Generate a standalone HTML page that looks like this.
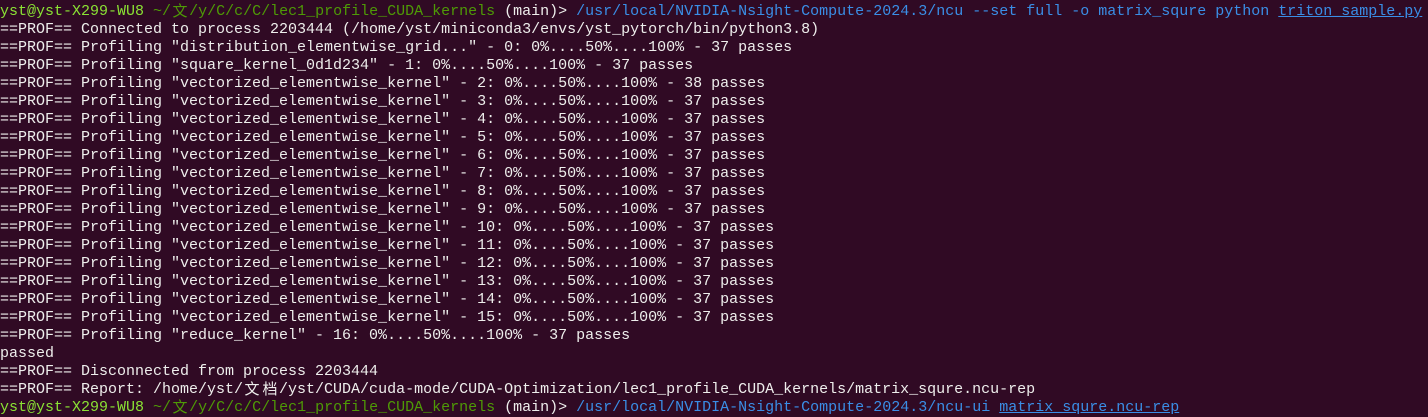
<!DOCTYPE html>
<html><head><meta charset="utf-8"><style>
html,body{margin:0;padding:0;background:#300a24;width:1428px;height:417px;overflow:hidden}
pre{margin:0;padding:3px 0 0 0;font-family:"Liberation Mono","Noto Sans CJK SC",monospace;font-size:15px;line-height:18px;color:#eeeeec;white-space:pre}
.u{color:#8ae234}.p{color:#4e9a06}.b{color:#3a8ee6}.ul{text-decoration:underline}
.c{display:inline-block;width:18px;height:18px;line-height:16px;vertical-align:top;overflow:hidden;text-align:center;font-family:"Noto Sans CJK SC",sans-serif;font-size:15px}
</style></head><body><pre><span class="u">yst@yst-X299-WU8</span> <span class="p">~/<span class="c">文</span>/y/C/c/C/lec1_profile_CUDA_kernels</span> (main)&gt; <span class="b">/usr/local/NVIDIA-Nsight-Compute-2024.3/ncu --set full -o matrix_squre python <span class="ul">triton_sample.py</span></span>
==PROF== Connected to process 2203444 (/home/yst/miniconda3/envs/yst_pytorch/bin/python3.8)
==PROF== Profiling "distribution_elementwise_grid..." - 0: 0%....50%....100% - 37 passes
==PROF== Profiling "square_kernel_0d1d234" - 1: 0%....50%....100% - 37 passes
==PROF== Profiling "vectorized_elementwise_kernel" - 2: 0%....50%....100% - 38 passes
==PROF== Profiling "vectorized_elementwise_kernel" - 3: 0%....50%....100% - 37 passes
==PROF== Profiling "vectorized_elementwise_kernel" - 4: 0%....50%....100% - 37 passes
==PROF== Profiling "vectorized_elementwise_kernel" - 5: 0%....50%....100% - 37 passes
==PROF== Profiling "vectorized_elementwise_kernel" - 6: 0%....50%....100% - 37 passes
==PROF== Profiling "vectorized_elementwise_kernel" - 7: 0%....50%....100% - 37 passes
==PROF== Profiling "vectorized_elementwise_kernel" - 8: 0%....50%....100% - 37 passes
==PROF== Profiling "vectorized_elementwise_kernel" - 9: 0%....50%....100% - 37 passes
==PROF== Profiling "vectorized_elementwise_kernel" - 10: 0%....50%....100% - 37 passes
==PROF== Profiling "vectorized_elementwise_kernel" - 11: 0%....50%....100% - 37 passes
==PROF== Profiling "vectorized_elementwise_kernel" - 12: 0%....50%....100% - 37 passes
==PROF== Profiling "vectorized_elementwise_kernel" - 13: 0%....50%....100% - 37 passes
==PROF== Profiling "vectorized_elementwise_kernel" - 14: 0%....50%....100% - 37 passes
==PROF== Profiling "vectorized_elementwise_kernel" - 15: 0%....50%....100% - 37 passes
==PROF== Profiling "reduce_kernel" - 16: 0%....50%....100% - 37 passes
passed
==PROF== Disconnected from process 2203444
==PROF== Report: /home/yst/<span class="c">文</span><span class="c">档</span>/yst/CUDA/cuda-mode/CUDA-Optimization/lec1_profile_CUDA_kernels/matrix_squre.ncu-rep
<span class="u">yst@yst-X299-WU8</span> <span class="p">~/<span class="c">文</span>/y/C/c/C/lec1_profile_CUDA_kernels</span> (main)&gt; <span class="b">/usr/local/NVIDIA-Nsight-Compute-2024.3/ncu-ui <span class="ul">matrix_squre.ncu-rep</span></span></pre></body></html>
